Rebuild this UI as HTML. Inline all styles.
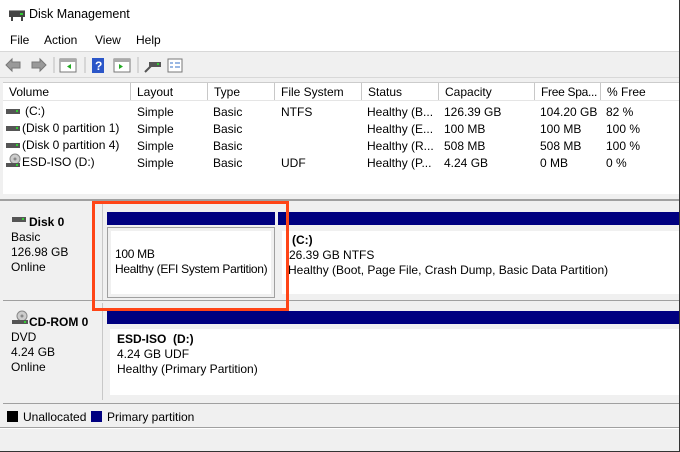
<!DOCTYPE html>
<html><head><style>
*{margin:0;padding:0;box-sizing:border-box}
body{width:680px;height:452px;overflow:hidden;background:#f0f0f0;font-family:"Liberation Sans",Arial,sans-serif;font-size:12px;color:#000;position:relative}
.a{position:absolute}
.t{white-space:nowrap}
.hdr{position:absolute;top:83px;height:18px;border-right:1px solid #c8c8c8;background:#fff;padding:2px 0 0 6px;white-space:nowrap;overflow:hidden}
.row{position:absolute;white-space:nowrap}
.blue{position:absolute;background:#000080}
.box{position:absolute;background:#fff;border:1px solid #a0a0a0;padding:4px 4px;white-space:nowrap}
.lbl{position:absolute;left:3px;width:100px;background:#f0f0f0;border-right:1px solid #c8c8c8;padding:2px 0 0 8px;line-height:15px}
</style></head><body>
<div class="a" style="left:0;top:0;width:680px;height:28px;background:#fff"></div>
<svg class="a" style="left:8px;top:8px" width="18" height="14"><rect x="1" y="3" width="16" height="6" fill="#444"/><rect x="3" y="9" width="2" height="4" fill="#444"/><rect x="13" y="9" width="2" height="4" fill="#444"/><rect x="12" y="5" width="3" height="2" fill="#3c3"/><rect x="1" y="2" width="16" height="1" fill="#999"/></svg>
<div class="a t" style="left:29px;top:7px;font-size:12.5px">Disk Management</div>
<div class="a" style="left:0;top:28px;width:680px;height:23px;background:#fff"></div>
<div class="a t" style="left:10px;top:33px">File</div>
<div class="a t" style="left:44px;top:33px">Action</div>
<div class="a t" style="left:95px;top:33px">View</div>
<div class="a t" style="left:136px;top:33px">Help</div>
<div class="a" style="left:0;top:51px;width:680px;height:1px;background:#d8d8d8"></div>
<svg class="a" style="left:4px;top:56px" width="190" height="18">
<path d="M2 9 L8 3 V6 H16 V12 H8 V15Z" fill="#999" stroke="#777"/>
<path d="M42 9 L36 3 V6 H28 V12 H36 V15Z" fill="#999" stroke="#777"/>
<line x1="50" y1="1" x2="50" y2="17" stroke="#bbb"/>
<rect x="56" y="3" width="16" height="13" fill="#fff" stroke="#777"/><rect x="56" y="3" width="16" height="3" fill="#aaa"/><path d="M67 8 L63 10.5 L67 13Z" fill="#2a2"/>
<line x1="81" y1="1" x2="81" y2="17" stroke="#bbb"/>
<rect x="88" y="2" width="12" height="15" fill="#2b56c8"/><text x="91" y="14" fill="#fff" font-size="12" font-weight="bold" font-family="Liberation Sans">?</text>
<rect x="110" y="3" width="16" height="13" fill="#fff" stroke="#777"/><rect x="110" y="3" width="16" height="3" fill="#aaa"/><path d="M115 8 L119 10.5 L115 13Z" fill="#2a2"/>
<line x1="134" y1="1" x2="134" y2="17" stroke="#bbb"/>
<rect x="145" y="6" width="12" height="5" fill="#555"/><path d="M141 16 L147 10" stroke="#555" stroke-width="2"/><rect x="153" y="7" width="2" height="2" fill="#3c3"/>
<rect x="164" y="3" width="14" height="13" fill="#fff" stroke="#777"/><path d="M166 7h3M171 7h5M166 11h3M171 11h5" stroke="#3470c8"/>
</svg>
<div class="a" style="left:0;top:77px;width:680px;height:1px;background:#d8d8d8"></div>
<div class="a" style="left:3px;top:82px;width:677px;height:112px;background:#fff;border-top:1px solid #ccc"></div>
<div class="hdr" style="left:3px;width:128px">Volume</div>
<div class="hdr" style="left:131px;width:77px">Layout</div>
<div class="hdr" style="left:208px;width:67px">Type</div>
<div class="hdr" style="left:275px;width:87px">File System</div>
<div class="hdr" style="left:362px;width:77px">Status</div>
<div class="hdr" style="left:439px;width:96px">Capacity</div>
<div class="hdr" style="left:535px;width:66px;letter-spacing:-0.3px">Free Spa...</div>
<div class="hdr" style="left:601px;width:79px;border-right:none">% Free</div>
<div class="a" style="left:3px;top:100px;width:677px;height:1px;background:#e5e5e5"></div>
<svg class="a" style="left:6px;top:106px" width="16" height="64">
<rect x="0" y="3" width="14" height="5" fill="#555"/><rect x="10" y="4" width="2" height="2" fill="#3c3"/>
<rect x="0" y="20" width="14" height="5" fill="#555"/><rect x="10" y="21" width="2" height="2" fill="#3c3"/>
<rect x="0" y="37" width="14" height="5" fill="#555"/><rect x="10" y="38" width="2" height="2" fill="#3c3"/>
<circle cx="9" cy="53" r="5" fill="#ccc" stroke="#888"/><circle cx="9" cy="53" r="1.5" fill="#888"/><rect x="0" y="57" width="14" height="4" fill="#555"/><rect x="10" y="58" width="2" height="2" fill="#3c3"/>
</svg>
<div class="row" style="left:25px;top:104px">(C:)</div>
<div class="row" style="left:22px;top:121px">(Disk 0 partition 1)</div>
<div class="row" style="left:22px;top:138px">(Disk 0 partition 4)</div>
<div class="row" style="left:22px;top:155px">ESD-ISO (D:)</div>
<div class="row" style="left:137px;top:104px;line-height:17px">Simple<br>Simple<br>Simple<br>Simple</div>
<div class="row" style="left:213px;top:104px;line-height:17px">Basic<br>Basic<br>Basic<br>Basic</div>
<div class="row" style="left:281px;top:104px;line-height:17px">NTFS<br><br><br>UDF</div>
<div class="row" style="left:367px;top:104px;line-height:17px">Healthy (B...<br>Healthy (E...<br>Healthy (R...<br>Healthy (P...</div>
<div class="row" style="left:444px;top:104px;line-height:17px">126.39 GB<br>100 MB<br>508 MB<br>4.24 GB</div>
<div class="row" style="left:540px;top:104px;line-height:17px">104.20 GB<br>100 MB<br>508 MB<br>0 MB</div>
<div class="row" style="left:606px;top:104px;line-height:17px">82 %<br>100 %<br>100 %<br>0 %</div>
<div class="a" style="left:0;top:199px;width:680px;height:2px;background:#a0a0a0"></div>
<div class="a" style="left:3px;top:201px;width:677px;height:203px;background:#f0f0f0"></div>
<div class="lbl" style="top:203px;height:97px;padding-top:12px">
<svg class="a" style="left:9px;top:13px" width="16" height="8"><rect x="0" y="1" width="14" height="5" fill="#555"/><rect x="10" y="2" width="2" height="2" fill="#3c3"/></svg>
<div style="padding-left:18px;font-weight:bold">Disk 0</div>Basic<br>126.98 GB<br>Online</div>
<div class="a" style="left:3px;top:300px;width:677px;height:1px;background:#a0a0a0"></div>
<div class="blue" style="left:107px;top:212px;width:168px;height:13px"></div>
<div class="blue" style="left:278px;top:212px;width:402px;height:13px"></div>
<div class="box" style="left:107px;top:227px;width:168px;height:71px;padding-top:16px;line-height:15px;border:4px solid #f0f0f0;outline:1px solid #a0a0a0;outline-offset:-1px;letter-spacing:-0.3px">100 MB<br>Healthy (EFI System Partition)</div>
<div class="box" style="left:278px;top:227px;width:402px;height:71px;padding:2px 0 0 10px;line-height:15px;border:4px solid #f0f0f0;border-right:none"><span style="font-weight:bold">(C:)</span><br><span style="margin-left:-3px">26.39 GB NTFS</span><br><span style="margin-left:-4px">Healthy (Boot, Page File, Crash Dump, Basic Data Partition)</span></div>
<div class="lbl" style="top:303px;height:97px;padding-top:12px">
<svg class="a" style="left:9px;top:7px" width="18" height="16"><circle cx="10" cy="6" r="5" fill="#ccc" stroke="#888"/><circle cx="10" cy="6" r="1.5" fill="#888"/><rect x="0" y="10" width="16" height="4" fill="#555"/><rect x="12" y="11" width="2" height="2" fill="#3c3"/></svg>
<div style="padding-left:18px;font-weight:bold">CD-ROM 0</div>DVD<br>4.24 GB<br>Online</div>
<div class="blue" style="left:107px;top:311px;width:573px;height:13px"></div>
<div class="box" style="left:107px;top:326px;width:573px;height:72px;padding:3px 0 0 7px;line-height:15px;border:3px solid #f0f0f0;border-right:none;"><span style="font-weight:bold">ESD-ISO&nbsp; (D:)</span><br>4.24 GB UDF<br>Healthy (Primary Partition)</div>
<div class="a" style="left:3px;top:403px;width:677px;height:1px;background:#a0a0a0"></div>
<div class="a" style="left:7px;top:411px;width:11px;height:11px;background:#000"></div>
<div class="a t" style="left:23px;top:410px">Unallocated</div>
<div class="a" style="left:91px;top:411px;width:11px;height:11px;background:#000080"></div>
<div class="a t" style="left:107px;top:410px">Primary partition</div>
<div class="a" style="left:0;top:427px;width:680px;height:1px;background:#a0a0a0"></div>
<div class="a" style="left:0;top:428px;width:680px;height:1px;background:#fff"></div>
<div class="a" style="left:679px;top:0;width:1px;height:452px;background:#333"></div>
<div class="a" style="left:0;top:451px;width:680px;height:1px;background:#333"></div>
<div class="a" style="left:92px;top:201px;width:197px;height:110px;border:3px solid #ff4517"></div>
</body></html>
